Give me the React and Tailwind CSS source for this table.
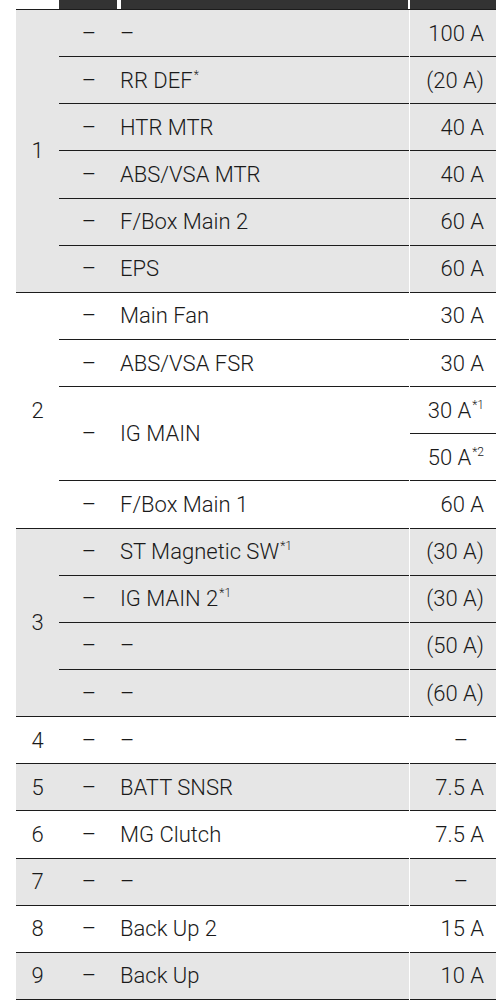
import React from 'react';

const groups = [
  {
    num: '1',
    gray: true,
    rows: [
      { name: '–', rating: ['100 A'] },
      { name: 'RR DEF', sup: '*', rating: ['(20 A)'] },
      { name: 'HTR MTR', rating: ['40 A'] },
      { name: 'ABS/VSA MTR', rating: ['40 A'] },
      { name: 'F/Box Main 2', rating: ['60 A'] },
      { name: 'EPS', rating: ['60 A'] },
    ],
  },
  {
    num: '2',
    gray: false,
    rows: [
      { name: 'Main Fan', rating: ['30 A'] },
      { name: 'ABS/VSA FSR', rating: ['30 A'] },
      { name: 'IG MAIN', rating: ['30 A', '50 A'], ratingSup: ['*1', '*2'] },
      { name: 'F/Box Main 1', rating: ['60 A'] },
    ],
  },
  {
    num: '3',
    gray: true,
    rows: [
      { name: 'ST Magnetic SW', sup: '*1', rating: ['(30 A)'] },
      { name: 'IG MAIN 2', sup: '*1', rating: ['(30 A)'] },
      { name: '–', rating: ['(50 A)'] },
      { name: '–', rating: ['(60 A)'] },
    ],
  },
  { num: '4', gray: false, rows: [{ name: '–', rating: ['–'] }] },
  { num: '5', gray: true, rows: [{ name: 'BATT SNSR', rating: ['7.5 A'] }] },
  { num: '6', gray: false, rows: [{ name: 'MG Clutch', rating: ['7.5 A'] }] },
  { num: '7', gray: true, rows: [{ name: '–', rating: ['–'] }] },
  { num: '8', gray: false, rows: [{ name: 'Back Up 2', rating: ['15 A'] }] },
  { num: '9', gray: true, rows: [{ name: 'Back Up', rating: ['10 A'] }] },
];

const line = 'border-t border-t-[#1c1c1c]';

function Sup({ children }) {
  return <span className="relative -top-[9px] text-[12px] ml-[1px]">{children}</span>;
}

function RatingCell({ value, sup, top }) {
  const isDash = value === '–';
  return (
    <td
      className={`${top ? line : ''} border-l border-l-white text-right align-middle ${
        isDash ? 'pr-[28px]' : 'pr-[12px]'
      }`}
    >
      {value}
      {sup && <Sup>{sup}</Sup>}
    </td>
  );
}

function GroupRows({ group }) {
  const totalRows = group.rows.reduce((n, r) => n + r.rating.length, 0);
  const bg = group.gray ? 'bg-[#e6e6e6]' : 'bg-white';
  const out = [];

  group.rows.forEach((row, i) => {
    const span = row.rating.length;
    out.push(
      <tr key={`${group.num}-${i}`} className={`h-[47.15px] ${bg}`}>
        {i === 0 && (
          <td rowSpan={totalRows} className={`${line} text-center align-middle`}>
            {group.num}
          </td>
        )}
        <td rowSpan={span} className={`${line} text-center align-middle`}>
          –
        </td>
        <td rowSpan={span} className={`${line} pl-[1px] align-middle`}>
          {row.name}
          {row.sup && <Sup>{row.sup}</Sup>}
        </td>
        <RatingCell value={row.rating[0]} sup={row.ratingSup?.[0]} top />
      </tr>
    );
    for (let k = 1; k < span; k++) {
      out.push(
        <tr key={`${group.num}-${i}-${k}`} className={`h-[47.15px] ${bg}`}>
          <RatingCell value={row.rating[k]} sup={row.ratingSup?.[k]} top />
        </tr>
      );
    }
  });

  return out;
}

export default function App() {
  return (
    <div className="bg-white min-h-screen pl-[16px] font-['Roboto','Noto_Sans',sans-serif] font-light text-[22px] text-[#1a1a1a]">
      <table className="w-[480px] table-fixed border-collapse border-b border-b-[#1c1c1c]">
        <colgroup>
          <col className="w-[43px]" />
          <col className="w-[60px]" />
          <col className="w-[290px]" />
          <col className="w-[87px]" />
        </colgroup>
        <thead>
          <tr className="h-[9px]">
            <td className="p-0" />
            <td className="p-0 pr-[2px]">
              <div className="h-[9px] bg-[#333333]" />
            </td>
            <td className="p-0 pl-[2px] pr-[1px]">
              <div className="h-[9px] bg-[#333333]" />
            </td>
            <td className="p-0 pl-[1px]">
              <div className="h-[9px] bg-[#333333]" />
            </td>
          </tr>
        </thead>
        <tbody>
          {groups.map((g) => (
            <GroupRows key={g.num} group={g} />
          ))}
        </tbody>
      </table>
    </div>
  );
}
